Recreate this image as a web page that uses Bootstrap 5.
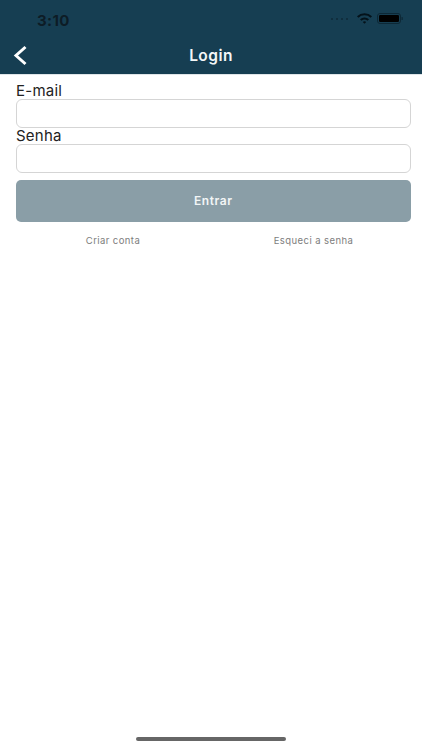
<!DOCTYPE html>
<html lang="pt">
<head>
<meta charset="utf-8">
<title>Login</title>
<link href="https://cdn.jsdelivr.net/npm/bootstrap@5.3.0/dist/css/bootstrap.min.css" rel="stylesheet">
<style>
html,body{height:100%;}
body{font-family:Inter,"Liberation Sans",Arial,sans-serif;background:#fff;color:#222;}
.app-frame{height:750px;width:422px;overflow:hidden;}
.app-head{background:#163e52;height:75px;border-bottom:1px solid #dfe5e8;}
.status-row{height:38px;padding:7px 18px 0 37px;}
.clock{font-size:15px;font-weight:700;color:#0d1c26;letter-spacing:.4px;line-height:28px;}
.title-row{height:36px;}
.back-btn{left:12px;top:5px;width:16px;height:24px;}
.head-title{font-size:15.5px;font-weight:600;color:#f4f7f8;letter-spacing:.45px;line-height:36px;}
.login-form{padding:8px 11px 0 15.5px;}
.field-label{font-size:15px;line-height:15px;height:15px;color:#222;letter-spacing:.25px;margin:0 0 1px .5px;display:block;}
.field-box.form-control{height:28.5px;border:1px solid #d5d5d5;border-radius:6px;padding:0 8px;margin-bottom:.5px;}
.go-btn.btn{height:42px;width:100%;background:#8a9ea7;border:0;border-radius:5px;color:#f2f5f6;font-size:12px;font-weight:600;letter-spacing:.55px;margin-top:7px;padding:0;}
.form-links{margin-top:12px;height:13px;}
.form-links a{font-size:9.5px;line-height:13px;color:#7d7d7d;letter-spacing:.42px;text-decoration:none;}
.link-a{width:195px;}
.link-b{width:200px;margin-left:3px;}
.home-bar{width:150px;height:4px;background:#666;border-radius:2px;margin:0 auto 9px;}
</style>
</head>
<body>
<div class="app-frame d-flex flex-column">
  <header class="app-head flex-shrink-0">
    <div class="status-row d-flex justify-content-between align-items-start">
      <span class="clock">3:10</span>
      <svg width="74" height="14" viewBox="0 0 74 14" class="mt-1" aria-hidden="true">
        <g fill="#0f2a38"><circle cx="2" cy="8" r="1"/><circle cx="7" cy="8" r="1"/><circle cx="12" cy="8" r="1"/><circle cx="17" cy="8" r="1"/></g>
        <path d="M27 5.2a11 11 0 0 1 15 0l-1.4 1.5a9 9 0 0 0-12.2 0z" fill="#04121a"/>
        <path d="M30 8.3a6.6 6.6 0 0 1 9 0l-1.5 1.5a4.4 4.4 0 0 0-6 0z" fill="#04121a"/>
        <path d="M32.8 11a2.4 2.4 0 0 1 3.4 0l-1.7 1.8z" fill="#04121a"/>
        <rect x="47.5" y="2.5" width="23" height="10" rx="2.5" fill="none" stroke="#0d2836" stroke-width="1"/>
        <rect x="49" y="4" width="20" height="7" rx="1.3" fill="#000"/>
        <rect x="71.5" y="6" width="1.3" height="3" rx=".6" fill="#0d2836"/>
      </svg>
    </div>
    <div class="title-row position-relative text-center">
      <svg class="back-btn position-absolute" viewBox="0 0 16 24" aria-hidden="true"><path d="M13.5 4 4 12.5l9.5 8.5" fill="none" stroke="#fff" stroke-width="3"/></svg>
      <span class="head-title">Login</span>
    </div>
  </header>
  <main class="login-form flex-grow-1">
    <label class="field-label" for="em">E-mail</label>
    <input id="em" type="email" class="form-control field-box">
    <label class="field-label" for="pw">Senha</label>
    <input id="pw" type="password" class="form-control field-box">
    <button type="button" class="btn go-btn">Entrar</button>
    <div class="form-links d-flex text-center">
      <a href="#" class="link-a flex-shrink-0">Criar conta</a>
      <a href="#" class="link-b flex-shrink-0">Esqueci a senha</a>
    </div>
  </main>
  <div class="home-bar flex-shrink-0"></div>
</div>
<script src="https://cdn.jsdelivr.net/npm/bootstrap@5.3.0/dist/js/bootstrap.bundle.min.js"></script>
</body>
</html>
